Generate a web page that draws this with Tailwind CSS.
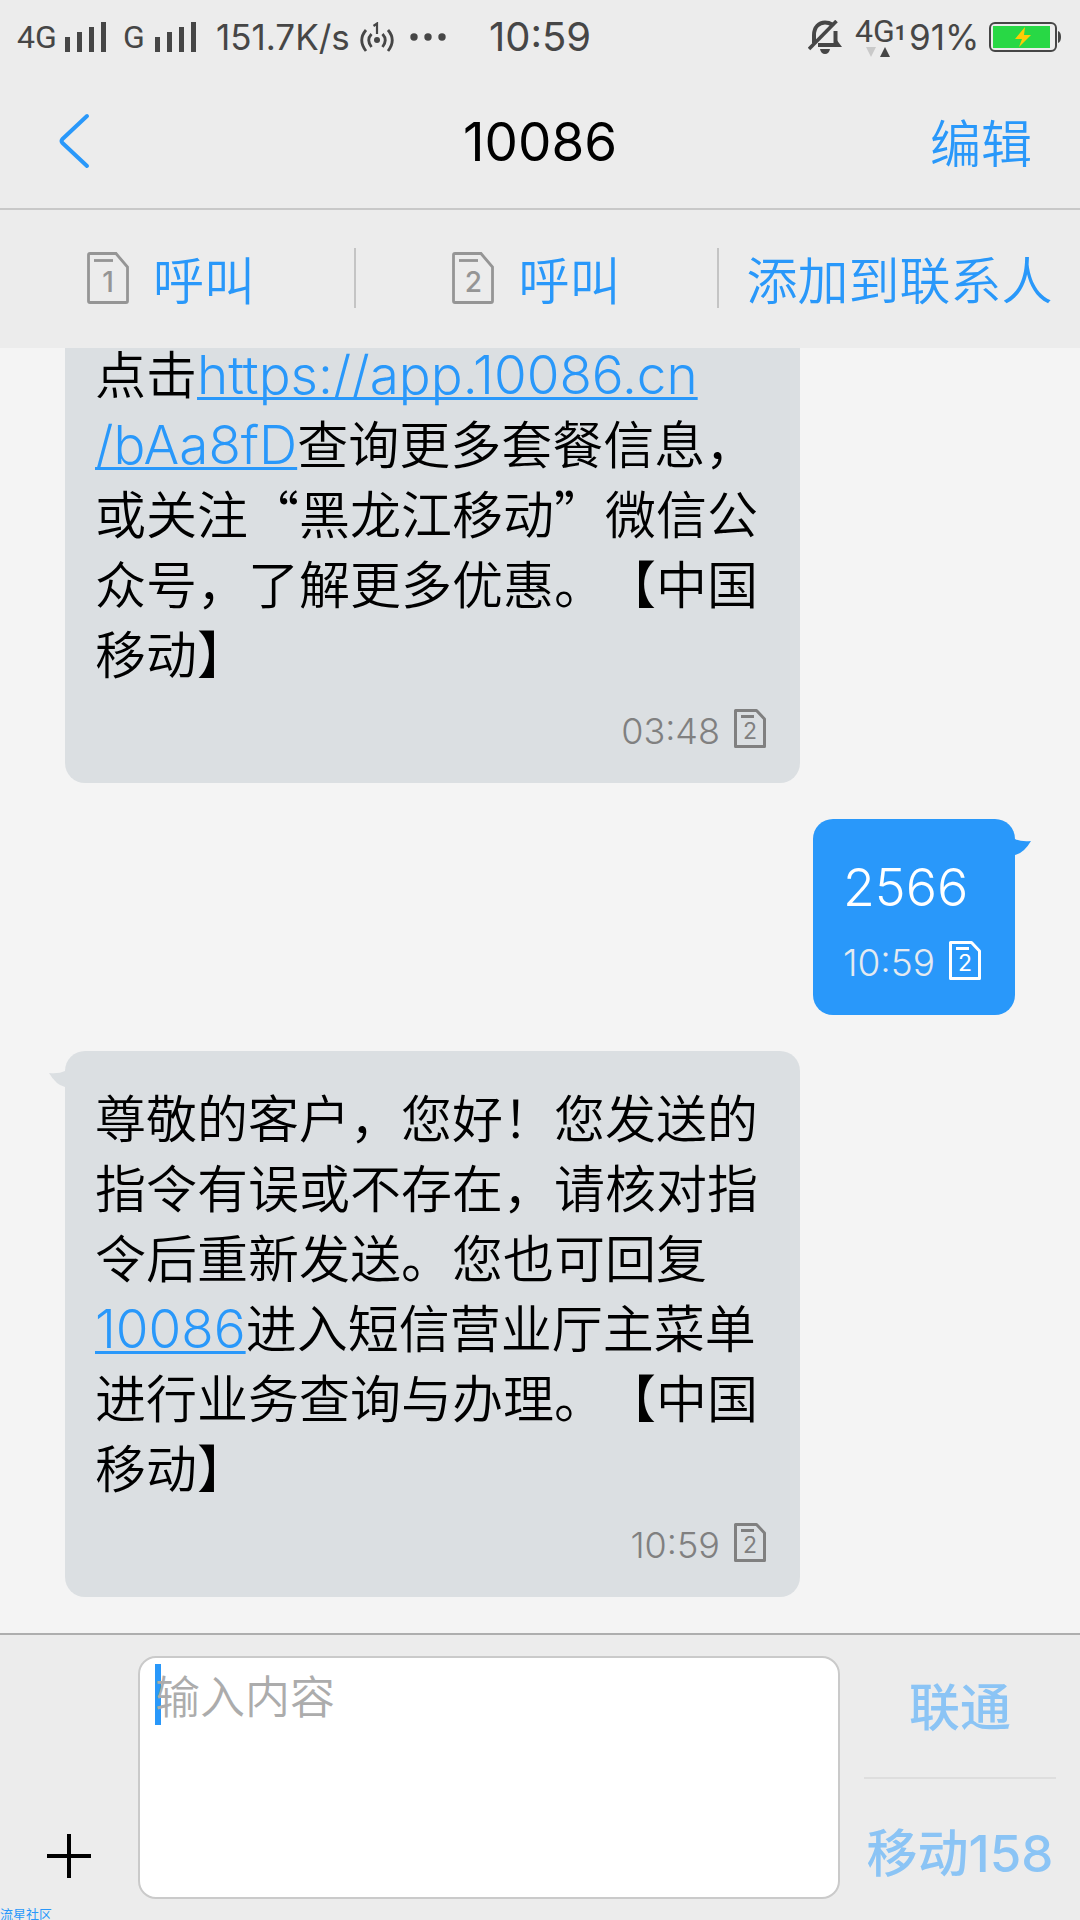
<!DOCTYPE html>
<html lang="zh-CN">
<head>
<meta charset="utf-8">
<meta name="viewport" content="width=device-width, initial-scale=1">
<title>10086</title>
<script src="https://cdn.jsdelivr.net/npm/@tailwindcss/browser@4"></script>
</head>
<body class="bg-[#ececec] text-black font-['Noto_Sans_CJK_SC',sans-serif]">
<svg class="hidden" aria-hidden="true">
  <symbol id="sim-lg" viewBox="0 0 42 52">
    <path d="M3 1.500H29L40.500 15V49Q40.500 50.500 39 50.500H3Q1.500 50.500 1.500 49V3Q1.500 1.500 3 1.500Z" fill="none" stroke="currentColor" stroke-width="2.800"/>
    <path d="M7 8.500H26" stroke="currentColor" stroke-width="2.800"/>
  </symbol>
  <symbol id="sim-sm" viewBox="0 0 32 39">
    <path d="M1.500 1.500H22.500L30.500 10V37.500H1.500Z" fill="none" stroke="currentColor" stroke-width="3" stroke-linejoin="round"/>
    <path d="M7 7.500H20" stroke="currentColor" stroke-width="3"/>
  </symbol>
  <symbol id="bars" viewBox="0 0 42 30">
    <path d="M0 15h5v15H0zM12 10h5v20h-5zM24 5h5v25h-5zM36 0h5v30h-5z" fill="currentColor"/>
  </symbol>
</svg>
<div class="flex h-screen flex-col overflow-hidden">

  <div class="relative flex h-[74px] shrink-0 items-center justify-between pl-[17px] pr-[19px] font-['Inter',sans-serif] text-[#464646]">
    <div class="flex items-center">
      <span class="w-12 font-['Roboto',sans-serif] text-[32px]">4G</span>
      <svg class="h-[30px] w-[42px]" role="img" aria-label="信号"><use href="#bars"/></svg>
      <span class="ml-4 w-8 font-['Roboto',sans-serif] text-[32px]">G</span>
      <svg class="h-[30px] w-[42px]" role="img" aria-label="信号"><use href="#bars"/></svg>
      <span class="ml-[19px] w-[144px] text-[35px]">151.7K/s</span>
      <svg class="h-[30px] w-[34px]" viewBox="0 0 34 30" fill="none" stroke="currentColor" stroke-width="2.800">
        <path d="M6 8Q-2.500 18 6 29M28 8Q36.500 18 28 29M11.500 12Q6 18 11.500 25M22.500 12Q28 18 22.500 25"/>
        <path d="M13.500 4L17 1.500V12" stroke-width="2.200"/>
        <circle cx="17" cy="18" r="3" fill="currentColor" stroke="none"/>
      </svg>
      <svg class="ml-4 h-2 w-9" viewBox="0 0 36 8" fill="currentColor"><circle cx="4" cy="4" r="3.700"/><circle cx="18" cy="4" r="3.700"/><circle cx="32" cy="4" r="3.700"/></svg>
    </div>
    <time class="absolute inset-x-0 text-center text-[40px]">10:59</time>
    <div class="flex items-center">
      <svg class="h-[34px] w-[34px]" viewBox="0 0 34 34" fill="none" stroke="currentColor">
        <path d="M6 23V15C6 7 11 2.500 17 2.500Q21 2.500 24 4.500M27.500 11V24M10 25H31" stroke-width="4"/>
        <path d="M28 19L34 27H27Z" fill="currentColor" stroke="none"/>
        <path d="M1 29L28.500 1" stroke-width="3.600"/>
        <path d="M12 29H22Q21 34 17 34Q13 34 12 29Z" fill="currentColor" stroke="none"/>
      </svg>
      <span class="relative ml-[13px] flex h-12 w-[54px] items-start font-['Roboto',sans-serif]">
        <span class="text-[32px] leading-9">4G</span><span class="mt-1.5 text-xl font-bold">1</span>
        <svg class="absolute bottom-1 left-[11px] h-[10px] w-6" viewBox="0 0 24 10"><path d="M0 0H10L5 10Z" fill="#c9c9c9"/><path d="M14 10H24L19 0Z" fill="#464646"/></svg>
      </span>
      <span class="w-[80px] text-[35px]">91%</span>
      <svg class="h-[30px] w-[72px]" viewBox="0 0 72 30">
        <rect x="1" y="1" width="66" height="28" rx="5" fill="none" stroke="#464646" stroke-width="2"/>
        <rect x="4" y="4" width="57" height="22" fill="#28d845"/>
        <path d="M36 5L26 17H33L30 25L42 13H35Z" fill="#ffcc05"/>
        <path d="M69 9Q72 10 72 15T69 21Z" fill="#464646"/>
      </svg>
    </div>
  </div>

  <header class="grid h-[136px] shrink-0 grid-cols-3 items-center border-b-2 border-[#c8c8c8] px-12">
    <button class="justify-self-start pl-2.5 text-[#2998fa]" aria-label="返回">
      <svg class="block h-14 w-8" viewBox="0 0 32 56" fill="none" stroke="currentColor" stroke-width="4" stroke-linecap="round"><path d="M29 3L4.500 26Q2.500 28 4.500 30L29 53"/></svg>
    </button>
    <h1 class="pt-0.5 text-center font-['Inter',sans-serif] text-[53px] leading-none">10086</h1>
    <button class="justify-self-end text-[51px] leading-none font-[350] text-[#2998fa]">编辑</button>
  </header>

  <nav class="grid h-[138px] shrink-0 grid-cols-[356fr_363fr_361fr] items-center pb-0.5 text-[51px] leading-none font-[350] text-[#2998fa]">
    <button class="flex h-[60px] items-center justify-center gap-6 border-r-2 border-[#c4c4c4] pr-3">
      <span class="relative flex h-[52px] w-[42px] justify-center text-[#959595]"><svg class="absolute inset-0 h-full w-full"><use href="#sim-lg"/></svg><span class="pt-4 font-['Inter',sans-serif] text-[28px] leading-7 font-medium">1</span></span>呼叫
    </button>
    <button class="flex h-[60px] items-center justify-center gap-6 border-r-2 border-[#c4c4c4]">
      <span class="relative flex h-[52px] w-[42px] justify-center text-[#959595]"><svg class="absolute inset-0 h-full w-full"><use href="#sim-lg"/></svg><span class="pt-4 font-['Inter',sans-serif] text-[28px] leading-7 font-medium">2</span></span>呼叫
    </button>
    <button class="text-center whitespace-nowrap">添加到联系人</button>
  </nav>

  <main class="flex min-h-0 flex-1 flex-col justify-end gap-9 overflow-hidden bg-[#f4f4f4] px-[65px] pb-9 text-[51px] leading-[70px] font-[350] [text-spacing-trim:space-all]">
    <article class="w-[735px] shrink-0 self-start rounded-[20px] bg-[#dbdfe2] px-[30px] pt-[30px] pb-[35px]">
      <p>点击<a href="https://app.10086.cn/bAa8fD" class="font-['Inter',sans-serif] text-[53px] leading-none font-light text-[#2998fa] underline decoration-3 underline-offset-3 [text-decoration-skip-ink:none]">https://app.10086.cn<wbr>/bAa8fD</a>查询更多套餐信息，或关注“黑龙江移动”微信公众号，了解更多优惠。【中国移动】</p>
      <div class="mt-[22px] mr-1 flex h-[39px] items-center justify-end gap-[14px] text-[#808080]">
        <time class="pt-1 font-['Inter',sans-serif] text-[36px] leading-none font-light">03:48</time>
        <span class="relative flex h-[39px] w-8 justify-center"><svg class="absolute inset-0 h-full w-full"><use href="#sim-sm"/></svg><span class="pt-2.5 font-['Inter',sans-serif] text-[23px] leading-6 font-normal">2</span></span>
      </div>
    </article>

    <article class="relative shrink-0 self-end rounded-[20px] bg-[#2998fa] px-[30px] pt-[34px] pb-[35px] text-white">
      <svg class="absolute top-5 -right-4 h-4 w-5" viewBox="0 0 20 16"><path d="M0 0H4Q10 3 20 2Q13 14 4 16H0Z" fill="#2998fa"/></svg>
      <p class="font-['Inter',sans-serif] text-[52px] font-light">2566</p>
      <div class="mt-[18px] mr-1 flex h-[39px] items-center justify-end gap-[14px]">
        <time class="pt-1 font-['Inter',sans-serif] text-[37px] leading-none font-light text-[#e4eaf0]">10:59</time>
        <span class="relative flex h-[39px] w-8 justify-center"><svg class="absolute inset-0 h-full w-full"><use href="#sim-sm"/></svg><span class="pt-2.5 font-['Inter',sans-serif] text-[23px] leading-6 font-normal">2</span></span>
      </div>
    </article>

    <article class="relative w-[735px] shrink-0 self-start rounded-[20px] bg-[#dbdfe2] px-[30px] pt-[30px] pb-[35px]">
      <svg class="absolute top-5 -left-4 h-4 w-5" viewBox="0 0 20 16"><path d="M20 0H16Q10 3 0 2Q7 14 16 16H20Z" fill="#dbdfe2"/></svg>
      <p>尊敬的客户，您好！您发送的指令有误或不存在，请核对指令后重新发送。您也可回复<a href="tel:10086" class="font-['Inter',sans-serif] text-[53px] leading-none font-light text-[#2998fa] underline decoration-3 underline-offset-3 [text-decoration-skip-ink:none]">10086</a>进入短信营业厅主菜单进行业务查询与办理。【中国移动】</p>
      <div class="mt-[22px] mr-1 flex h-[39px] items-center justify-end gap-[14px] text-[#808080]">
        <time class="pt-1 font-['Inter',sans-serif] text-[36px] leading-none font-light">10:59</time>
        <span class="relative flex h-[39px] w-8 justify-center"><svg class="absolute inset-0 h-full w-full"><use href="#sim-sm"/></svg><span class="pt-2.5 font-['Inter',sans-serif] text-[23px] leading-6 font-normal">2</span></span>
      </div>
    </article>
  </main>

  <footer class="relative flex h-[287px] shrink-0 border-t-2 border-[#aeaeae] pr-6">
    <button class="mb-[42px] flex w-[138px] shrink-0 items-end justify-center" aria-label="添加附件">
      <svg class="h-11 w-11" viewBox="0 0 44 44" stroke="#000" stroke-width="4"><path d="M0 22H44M22 0V44"/></svg>
    </button>
    <div class="my-[21px] flex-1">
      <textarea aria-label="输入内容" placeholder="输入内容" class="h-full w-full resize-none rounded-[18px] border-2 border-[#cacaca] bg-white bg-[linear-gradient(#2998fa,#2998fa)] bg-[length:6px_61px] bg-[position:15px_6px] bg-no-repeat px-[15px] pt-[7px] text-[45px] leading-[60px] font-[350] outline-none placeholder:text-[#acacac]"></textarea>
    </div>
    <div class="ml-6 grid w-48 shrink-0 grid-rows-[1fr_2px_1fr] text-[51px] leading-none font-medium text-[#8bc4f5]">
      <button class="pb-0.5 whitespace-nowrap">联通</button>
      <span class="bg-[#dedede]"></span>
      <button class="pt-1.5 whitespace-nowrap">移动<span class="font-['Inter',sans-serif]">158</span></button>
    </div>
    <span class="absolute bottom-0 left-0 text-[13px] leading-[13px] text-[#2998fa]">流星社区</span>
  </footer>
</div>
</body>
</html>
